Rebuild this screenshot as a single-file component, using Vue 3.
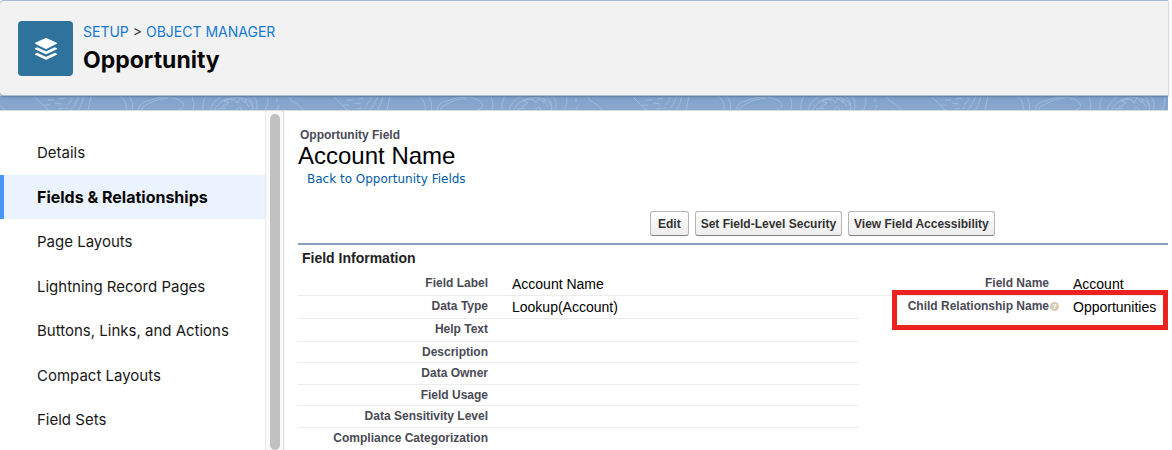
<script setup>
const navItems = [
  'Details',
  'Fields & Relationships',
  'Page Layouts',
  'Lightning Record Pages',
  'Buttons, Links, and Actions',
  'Compact Layouts',
  'Field Sets',
]
const activeItem = 'Fields & Relationships'
const actions = ['Edit', 'Set Field-Level Security', 'View Field Accessibility']
const emptyRows = [
  'Help Text',
  'Description',
  'Data Owner',
  'Field Usage',
  'Data Sensitivity Level',
  'Compliance Categorization',
]
</script>

<template>
  <div class="page">
    <header class="page-header">
      <div class="object-icon">
        <svg viewBox="0 0 24 24" width="24" height="24" fill="#fff" aria-hidden="true">
          <path d="M11.2 1.2q.8-.4 1.6 0l10 4.6q.8.5 0 1l-10 4.9q-.8.4-1.6 0l-10-4.900q-.8-.5 0-1z" />
          <path d="M1.200 11.200l2-1 8 3.900q.8.4 1.600 0l8-3.900 2 1q.8.5 0 1l-10 4.900q-.8.4-1.600 0l-10-4.900q-.8-.5 0-1z" />
          <path d="M1.200 16.700l2-1 8 3.900q.8.4 1.600 0l8-3.900 2 1q.8.500 0 1l-10 4.900q-.8.400-1.600 0l-10-4.900q-.8-.5 0-1z" />
        </svg>
      </div>
      <div class="heading">
        <nav class="crumbs" aria-label="Breadcrumb">
          <a href="#">SETUP</a> &gt; <a href="#">OBJECT MANAGER</a>
        </nav>
        <h1>Opportunity</h1>
      </div>
    </header>

    <svg class="band" aria-hidden="true">
      <defs>
        <pattern id="contours" width="299" height="15" patternUnits="userSpaceOnUse">
          <g fill="none" stroke="#9fbadb" stroke-width="1">
            <path d="M35 1L48 14M-11 0q3 6 9 8l8 7M288 0q3 6 9 8l8 7" />
            <path d="M48 4h6M59 3l6-1M44 9h6M55 7l7 1M46 14h4M58 13l5-1M67 9l5-5M65 13l3-2M70 2l3 0" />
            <path d="M79 0q-3 9-9 15M84 0q-2 9-6 15M91 0l-3 15" />
            <path d="M120 0q8 6 6 15M129 0q5 7 3 15" />
            <path d="M138 15q1-9 10-10q10-5 21-4q14 2 15 9q-2 4-8 5M143 15q-4-3 5-7q10-6 20-6" />
            <path d="M192 0q3 8 1 15M206 0q-4 6-3 15M222 0q-10 5-12 15M214 15q5-11 17-13q14-2 20 5q3 4 1 8" />
            <path d="M224 5q6-3 11-1l2 3l3-5l5 5v-3l4 7M224 5l5 2l-7 4M237 14q0-4 4-2l1 3M218 13l8-1" />
            <path d="M247 0q8 7 5 15M254 0q5 7 2 15M268 0q1 8-3 15M277 2v4M279 9l-2 5" />
          </g>
        </pattern>
      </defs>
      <rect width="100%" height="100%" fill="url(#contours)" />
    </svg>

    <div class="body">
      <nav class="sidebar" aria-label="Object sections">
        <a
          v-for="item in navItems"
          :key="item"
          href="#"
          class="nav-item"
          :class="{ active: item === activeItem }"
        >{{ item }}</a>
      </nav>
      <div class="scroll-track"><div class="scroll-thumb"></div></div>

      <main class="detail">
        <p class="kind">Opportunity Field</p>
        <h2>Account Name</h2>
        <a class="back" href="#">Back to Opportunity Fields</a>
        <div class="actions">
          <button v-for="action in actions" :key="action" type="button">{{ action }}</button>
        </div>
        <section class="info">
          <h3>Field Information</h3>
          <table>
            <colgroup>
              <col class="label-col" />
              <col />
              <col class="label-col" />
              <col class="value-col" />
            </colgroup>
            <tbody>
              <tr>
                <th scope="row">Field Label</th>
                <td>Account Name</td>
                <th scope="row">Field Name</th>
                <td>Account</td>
              </tr>
              <tr>
                <th scope="row">Data Type</th>
                <td>Lookup(Account)</td>
                <th scope="row" class="plain with-help">
                  Child Relationship Name<span class="help">?</span>
                  <span class="highlight"></span>
                </th>
                <td class="plain">Opportunities</td>
              </tr>
              <tr v-for="label in emptyRows" :key="label">
                <th scope="row">{{ label }}</th>
                <td></td>
              </tr>
            </tbody>
          </table>
        </section>
      </main>
    </div>
  </div>
</template>

<style>
body {
  margin: 0;
  background: #fff;
}
</style>

<style scoped>
* {
  box-sizing: border-box;
}
.page {
  display: flex;
  flex-direction: column;
  min-height: 100vh;
  margin-right: 4px;
  font-family: Inter, "Liberation Sans", sans-serif;
  color: #080707;
}
a {
  text-decoration: none;
}
.page-header {
  position: relative;
  display: flex;
  gap: 10px;
  height: 96px;
  padding: 20px 18px;
  border-top: 1px solid #a5bad2;
  border-bottom: 1px solid #b5bcc2;
  border-radius: 4px 0 0 4px;
  background: #f2f2f2;
  box-shadow: 0 1px 2px #5d7d9f;
}
.object-icon {
  display: flex;
  align-items: center;
  justify-content: center;
  width: 55px;
  height: 55px;
  border-radius: 4px;
  background: #2f739d;
}
.crumbs {
  margin-top: 1px;
  font-size: 14px;
  line-height: 20px;
  color: #3e3e3c;
}
.crumbs a {
  color: #1379d3;
}
h1 {
  margin: 3px 0 0;
  font-size: 23px;
  line-height: 30px;
  font-weight: 700;
}
.band {
  display: block;
  width: 100%;
  height: 14px;
  background: linear-gradient(#7fa1c9, #89a8d0);
}
.body {
  display: flex;
  flex: 1;
  border-top: 1px solid #d9d8d8;
  background: #fff;
}
.sidebar {
  width: 265px;
  padding-top: 19px;
}
.nav-item {
  display: block;
  height: 44px;
  padding-left: 37px;
  font-size: 15px;
  line-height: 46px;
  color: #181818;
}
.nav-item:nth-child(odd) {
  margin-bottom: 1px;
}
.nav-item.active {
  padding-left: 33px;
  border-left: 4px solid #4896f8;
  background: #ebf3fe;
  font-size: 16px;
  line-height: 44px;
  color: #080707;
  font-weight: 700;
}
.scroll-track {
  width: 19px;
  padding: 3px 3px 0 4px;
  border-left: 1px solid #e8e8e8;
  border-right: 1px solid #dcdcdc;
  background: #fafafa;
}
.scroll-thumb {
  width: 10px;
  height: 100%;
  border-radius: 5px;
  background: #c1c1c1;
}
.detail {
  flex: 1;
  padding: 16px 0 0 14px;
  font-family: "Liberation Sans", Arial, sans-serif;
}
.kind {
  margin: 0 0 0 2px;
  font-size: 12px;
  line-height: 16px;
  font-weight: 700;
  color: #4a4a56;
}
h2 {
  margin: 0;
  font-size: 24px;
  line-height: 26px;
  font-weight: 400;
  color: #000;
}
.back {
  display: block;
  margin-left: 9px;
  font-family: "DejaVu Sans", Verdana, sans-serif;
  font-size: 12px;
  line-height: 20px;
  color: #015ba7;
}
.actions {
  display: flex;
  gap: 6px;
  margin: 22px 0 7px 352px;
}
button {
  height: 25px;
  padding: 0 5px;
  border: 1px solid #b5b5b5;
  border-bottom-color: #7f7f7f;
  border-radius: 3px;
  background: linear-gradient(#fff, #ededed);
  font: 700 12px/20px "Liberation Sans", Arial, sans-serif;
  color: #333;
}
button:first-child {
  padding: 0 7px;
}
.info {
  border-top: 2px solid #8e9dbe;
}
h3 {
  margin: 3px 0 5px 4px;
  font-size: 14px;
  line-height: 20px;
  color: #222;
}
table {
  width: 100%;
  table-layout: fixed;
  border-collapse: separate;
  border-spacing: 0;
}
.label-col {
  width: 202px;
}
.value-col {
  width: 107px;
}
th,
td {
  height: 23px;
  padding: 0 12px;
  border-bottom: 1px solid #ececec;
  font-size: 14px;
  line-height: 20px;
  text-align: left;
  vertical-align: top;
  white-space: nowrap;
  color: #000;
}
td {
  padding-top: 1px;
}
th {
  font-size: 12px;
  text-align: right;
  color: #4a4a56;
}
tr:nth-child(n + 3) > td {
  padding-top: 0;
}
tr:nth-child(n + 4) > * {
  height: 21px;
}
tr:nth-child(5) > *,
tr:nth-child(7) > * {
  height: 22px;
}
tr:last-child > *,
.plain {
  border-bottom: 0;
}
.with-help {
  position: relative;
  padding-right: 2px;
}
.help {
  display: inline-block;
  width: 9px;
  height: 9px;
  margin-left: 1px;
  border-radius: 50%;
  background: #d5c9b0;
  font-size: 8px;
  line-height: 9px;
  text-align: center;
  vertical-align: middle;
  color: #fff;
}
.highlight {
  position: absolute;
  top: -6px;
  right: -107px;
  left: 33px;
  height: 40px;
  border: 5px solid #ea231f;
}
</style>
